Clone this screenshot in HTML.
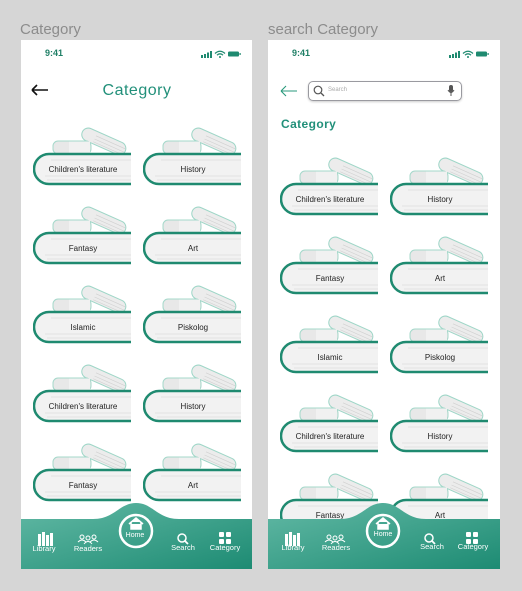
<!DOCTYPE html>
<html><head><style>
*{margin:0;padding:0;box-sizing:border-box}
body{width:522px;height:591px;background:#d6d6d6;font-family:"Liberation Sans",sans-serif;position:relative;overflow:hidden}
.lbl{position:absolute;top:21px;font-size:15px;color:#8c8c8c}
.frame{position:absolute;top:40px;height:529px;background:#fff;overflow:hidden}
.abs{position:absolute}
.time{position:absolute;top:8px;left:24px;font-size:9px;font-weight:bold;color:#1f7f66}
.book{position:absolute;width:98px;height:62px;overflow:hidden}
.book span{position:absolute;left:4px;right:2px;top:41px;text-align:center;font-size:8px;color:#222}
.nav{position:absolute;left:0;top:460px;width:232px;height:69px}
.nl{position:absolute;color:#fff;font-size:7.5px;text-align:center;width:50px}
</style></head><body>
<svg width="0" height="0" style="position:absolute">
<defs>
<symbol id="bk" viewBox="0 0 100 62">
<g transform="translate(52,2) rotate(24)"><rect x="0" y="0" width="47" height="13" rx="6.5" fill="#ececec" stroke="#9ed6c7" stroke-width="1"/><line x1="14" y1="4.5" x2="46" y2="4.5" stroke="#d0d0d0" stroke-width=".6"/><line x1="14" y1="8" x2="46" y2="8" stroke="#d0d0d0" stroke-width=".6"/><line x1="14" y1="11" x2="46" y2="11" stroke="#d0d0d0" stroke-width=".6"/></g>
<rect x="20" y="17" width="38" height="13" rx="5" fill="#e8e8e8" stroke="#a4d8ca" stroke-width="1"/>
<rect x="36" y="17.5" width="21" height="12" fill="#f1f1f1"/>
<path d="M100 30H16A15 15 0 0 0 16 60H100" fill="#f2f2f2" stroke="#1f8a70" stroke-width="2.5"/>
<line x1="18" y1="36" x2="100" y2="36" stroke="#dcdcdc" stroke-width=".7"/>
<line x1="12" y1="52" x2="100" y2="52" stroke="#dcdcdc" stroke-width=".7"/>
<line x1="14" y1="56" x2="100" y2="56" stroke="#dcdcdc" stroke-width=".7"/>
</symbol>
<linearGradient id="g" x1="0" y1="0" x2="1" y2="1"><stop offset="0" stop-color="#62b9a5"/><stop offset="1" stop-color="#1d8b73"/></linearGradient>
<symbol id="st" viewBox="0 0 40 8"><rect x="0" y="5" width="2" height="3" fill="#1f8a70"/><rect x="3" y="4" width="2" height="4" fill="#1f8a70"/><rect x="6" y="2.5" width="2" height="5.5" fill="#1f8a70"/><rect x="9" y="1" width="2" height="7" fill="#1f8a70"/><path d="M14 3.5Q19 -1 24 3.5M16 5.2Q19 2.5 22 5.2" stroke="#1f8a70" stroke-width="1.3" fill="none"/><circle cx="19" cy="7" r="1" fill="#1f8a70"/><rect x="27" y="1.5" width="11" height="5" rx="1.3" fill="#1f8a70"/><rect x="38.5" y="3" width="1.2" height="2" fill="#1f8a70"/></symbol>
<symbol id="nv" viewBox="0 0 232 69">
<path d="M0 19H72C94 19 98 3 115 3S136 19 158 19H232V69H0Z" fill="url(#g)"/>
<circle cx="115" cy="31" r="16" fill="none" stroke="#fff" stroke-width="2.5"/>
<path d="M108 24L115 18L122 24M110 22V29H120V22" fill="#fff" stroke="#fff" stroke-width="1.5"/>
<g transform="translate(0,17)">
<g fill="#fff"><rect x="17" y="17" width="3" height="12"/><rect x="21" y="15" width="3" height="14"/><rect x="25" y="18" width="3" height="11"/><rect x="29" y="16" width="3" height="13"/></g>
<g fill="none" stroke="#fff" stroke-width="1"><circle cx="61" cy="20" r="2"/><circle cx="67" cy="21" r="2"/><circle cx="73" cy="20" r="2"/><path d="M57 25Q61 21 65 25M63 27Q67 22 71 27M69 25Q73 21 77 25"/><circle cx="161" cy="21" r="4" stroke-width="1.5"/><path d="M164 24L167 27" stroke-width="1.8"/></g>
<g fill="#fff"><rect x="198" y="15" width="5" height="5" rx="1"/><rect x="205" y="15" width="5" height="5" rx="1"/><rect x="198" y="22" width="5" height="5" rx="1"/><rect x="205" y="22" width="5" height="5" rx="1"/></g>
</g>
</symbol>
</defs></svg>

<div class="lbl" style="left:20px">Category</div>
<div class="lbl" style="left:268px">search Category</div>

<div class="frame" style="left:21px;width:231px">
<div class="time">9:41</div>
<svg class="abs" style="left:180px;top:10px" width="40" height="8"><use href="#st"/></svg>
<svg class="abs" style="left:10px;top:44px" width="18" height="12"><path d="M1 6H17M1 6L6 1M1 6L6 11" stroke="#111" stroke-width="1.6" fill="none"/></svg>
<div class="abs" style="left:0;width:232px;top:42px;text-align:center;font-size:16px;color:#22907a;letter-spacing:.5px">Category</div>

<div class="book" style="left:12px;top:84px"><svg width="100" height="62"><use href="#bk"/></svg><span>Children's literature</span></div>
<div class="book" style="left:122px;top:84px"><svg width="100" height="62"><use href="#bk"/></svg><span>History</span></div>
<div class="book" style="left:12px;top:163px"><svg width="100" height="62"><use href="#bk"/></svg><span>Fantasy</span></div>
<div class="book" style="left:122px;top:163px"><svg width="100" height="62"><use href="#bk"/></svg><span>Art</span></div>
<div class="book" style="left:12px;top:242px"><svg width="100" height="62"><use href="#bk"/></svg><span>Islamic</span></div>
<div class="book" style="left:122px;top:242px"><svg width="100" height="62"><use href="#bk"/></svg><span>Piskolog</span></div>
<div class="book" style="left:12px;top:321px"><svg width="100" height="62"><use href="#bk"/></svg><span>Children's literature</span></div>
<div class="book" style="left:122px;top:321px"><svg width="100" height="62"><use href="#bk"/></svg><span>History</span></div>
<div class="book" style="left:12px;top:400px"><svg width="100" height="62"><use href="#bk"/></svg><span>Fantasy</span></div>
<div class="book" style="left:122px;top:400px"><svg width="100" height="62"><use href="#bk"/></svg><span>Art</span></div>

<svg class="nav"><use href="#nv"/></svg>
<div class="nl" style="left:-2px;top:504px">Library</div>
<div class="nl" style="left:42px;top:504px">Readers</div>
<div class="nl" style="left:89px;top:492px;font-size:7px">Home</div>
<div class="nl" style="left:137px;top:503px">Search</div>
<div class="nl" style="left:179px;top:503px">Category</div>
</div>

<div class="frame" style="left:268px;width:232px">
<div class="time">9:41</div>
<svg class="abs" style="left:181px;top:10px" width="40" height="8"><use href="#st"/></svg>
<svg class="abs" style="left:12px;top:45px" width="18" height="12"><path d="M1 6H17M1 6L6 1M1 6L6 11" stroke="#2a9a7c" stroke-width="1.1" fill="none"/></svg>
<div class="abs" style="left:40px;top:41px;width:154px;height:20px;border:1px solid #9a9aa0;border-radius:5px;box-shadow:0 1px 2px rgba(0,0,0,.2)">
<svg class="abs" style="left:4px;top:3px" width="12" height="12"><circle cx="5" cy="5" r="3.8" fill="none" stroke="#555" stroke-width="1.2"/><path d="M8 8L11 11" stroke="#555" stroke-width="1.3"/></svg>
<span class="abs" style="left:19px;top:5px;font-size:6px;color:#aaa">Search</span>
<svg class="abs" style="left:138px;top:3px" width="8" height="12"><rect x="2" y="0" width="4" height="7" rx="2" fill="#555"/><path d="M1 5Q4 10 7 5M4 8V11" stroke="#555" fill="none"/></svg>
</div>
<div class="abs" style="left:13px;top:77px;font-size:12px;font-weight:bold;color:#22907a;letter-spacing:.4px">Category</div>

<div class="book" style="left:12px;top:114px"><svg width="100" height="62"><use href="#bk"/></svg><span>Children's literature</span></div>
<div class="book" style="left:122px;top:114px"><svg width="100" height="62"><use href="#bk"/></svg><span>History</span></div>
<div class="book" style="left:12px;top:193px"><svg width="100" height="62"><use href="#bk"/></svg><span>Fantasy</span></div>
<div class="book" style="left:122px;top:193px"><svg width="100" height="62"><use href="#bk"/></svg><span>Art</span></div>
<div class="book" style="left:12px;top:272px"><svg width="100" height="62"><use href="#bk"/></svg><span>Islamic</span></div>
<div class="book" style="left:122px;top:272px"><svg width="100" height="62"><use href="#bk"/></svg><span>Piskolog</span></div>
<div class="book" style="left:12px;top:351px"><svg width="100" height="62"><use href="#bk"/></svg><span>Children's literature</span></div>
<div class="book" style="left:122px;top:351px"><svg width="100" height="62"><use href="#bk"/></svg><span>History</span></div>
<div class="book" style="left:12px;top:430px"><svg width="100" height="62"><use href="#bk"/></svg><span>Fantasy</span></div>
<div class="book" style="left:122px;top:430px"><svg width="100" height="62"><use href="#bk"/></svg><span>Art</span></div>

<svg class="nav"><use href="#nv"/></svg>
<div class="nl" style="left:0px;top:503px">Library</div>
<div class="nl" style="left:43px;top:503px">Readers</div>
<div class="nl" style="left:90px;top:491px;font-size:7px">Home</div>
<div class="nl" style="left:139px;top:502px">Search</div>
<div class="nl" style="left:180px;top:502px">Category</div>
</div>
</body></html>
